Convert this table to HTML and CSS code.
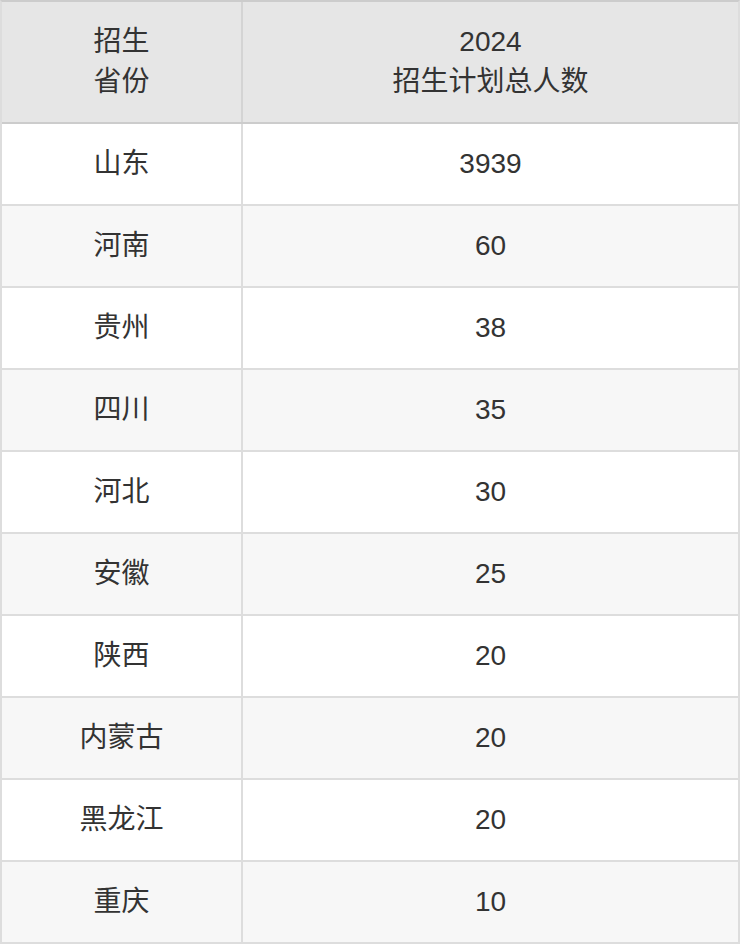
FILE: index.html
```html
<!DOCTYPE html>
<html lang="zh-CN">
<head>
<meta charset="utf-8">
<title>2024 招生计划</title>
<link rel="stylesheet" href="styles.css">
</head>
<body>
<div class="table">
  <div class="row head">
    <div class="cell c1">招生<br>省份</div>
    <div class="cell c2">2024<br>招生计划总人数</div>
  </div>
  <div class="row"><div class="cell c1">山东</div><div class="cell c2">3939</div></div>
  <div class="row alt"><div class="cell c1">河南</div><div class="cell c2">60</div></div>
  <div class="row"><div class="cell c1">贵州</div><div class="cell c2">38</div></div>
  <div class="row alt"><div class="cell c1">四川</div><div class="cell c2">35</div></div>
  <div class="row"><div class="cell c1">河北</div><div class="cell c2">30</div></div>
  <div class="row alt"><div class="cell c1">安徽</div><div class="cell c2">25</div></div>
  <div class="row"><div class="cell c1">陕西</div><div class="cell c2">20</div></div>
  <div class="row alt"><div class="cell c1">内蒙古</div><div class="cell c2">20</div></div>
  <div class="row"><div class="cell c1">黑龙江</div><div class="cell c2">20</div></div>
  <div class="row alt last"><div class="cell c1">重庆</div><div class="cell c2">10</div></div>
</div>
</body>
</html>
```
FILE: styles.css
```css
html, body {
  margin: 0;
  padding: 0;
  background: #ffffff;
}
body {
  font-family: "Liberation Sans", "Noto Sans CJK SC", sans-serif;
  font-size: 28px;
  line-height: 40px;
  color: #333333;
}
.table {
  width: 740px;
  box-sizing: border-box;
  border: 2px solid #dddddd;
  border-top-color: #cccccc;
  display: flex;
  flex-direction: column;
}
.row {
  display: flex;
  border-bottom: 2px solid #dddddd;
  background: #ffffff;
}
.row.last {
  border-bottom: none;
}
.row.alt {
  background: #f7f7f7;
}
.row.head {
  background: #e6e6e6;
  border-bottom-color: #cccccc;
}
.cell {
  padding: 20px 0;
  text-align: center;
}
.c1 {
  width: 239px;
  flex: none;
  border-right: 2px solid #dddddd;
}
.head .c1 {
  border-right-color: #d4d4d4;
}
.c2 {
  flex: 1;
}
```
